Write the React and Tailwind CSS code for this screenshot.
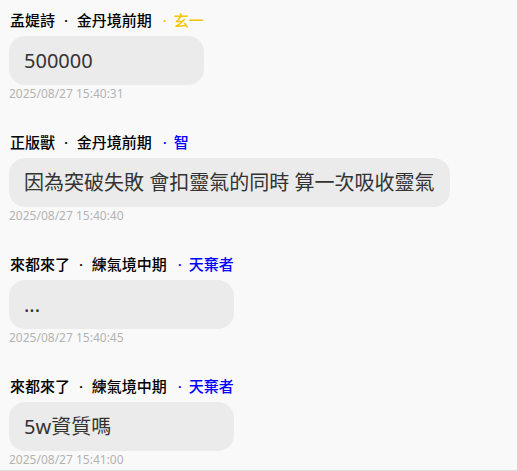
const messages = [
  { name: '孟媞詩', realm: '金丹境前期', title: '玄一', titleColor: 'text-[#f7c600]', text: '500000', time: '2025/08/27 15:40:31' },
  { name: '正版獸', realm: '金丹境前期', title: '智', titleColor: 'text-[#0000ff]', text: '因為突破失敗 會扣靈氣的同時 算一次吸收靈氣', time: '2025/08/27 15:40:40' },
  { name: '來都來了', realm: '練氣境中期', title: '天棄者', titleColor: 'text-[#0000ff]', text: '...', time: '2025/08/27 15:40:45' },
  { name: '來都來了', realm: '練氣境中期', title: '天棄者', titleColor: 'text-[#0000ff]', text: '5w資質嗎', time: '2025/08/27 15:41:00' },
];

// wide middle dot, like the CJK font of the original
const Dot = () => <span className="inline-block w-[14px] text-center">·</span>;

const Message = ({ msg }) => (
  <div className="flex flex-col items-start">
    <div className="inline-flex flex-col">
      {/* sender line */}
      <div className="pl-px text-[15px] leading-5 font-medium text-black whitespace-nowrap">
        {msg.name} <Dot /> {msg.realm}
        <span className={`ml-[6px] ${msg.titleColor}`}>
          <Dot />
          <span className="ml-[2px]">{msg.title}</span>
        </span>
      </div>
      <div className="mt-[6px] rounded-2xl bg-[#ebebeb] pl-[15px] pr-4 py-[11px] text-[20px] leading-[27px] text-[#333] whitespace-nowrap">
        {msg.text}
      </div>
    </div>
    <div className="mt-px text-[12px] leading-4 text-[#b3b3b3]">{msg.time}</div>
  </div>
);

export default function App() {
  return (
    <div
      className="h-[471px] overflow-hidden bg-[#f9f9f9] border-b border-[#dcdcdc] pl-[9px] pt-[10px] flex flex-col gap-[30px]"
      style={{ fontFamily: '"Noto Sans", "Noto Sans CJK TC", sans-serif' }}
    >
      {messages.map((m, i) => (
        <Message key={i} msg={m} />
      ))}
    </div>
  );
}
